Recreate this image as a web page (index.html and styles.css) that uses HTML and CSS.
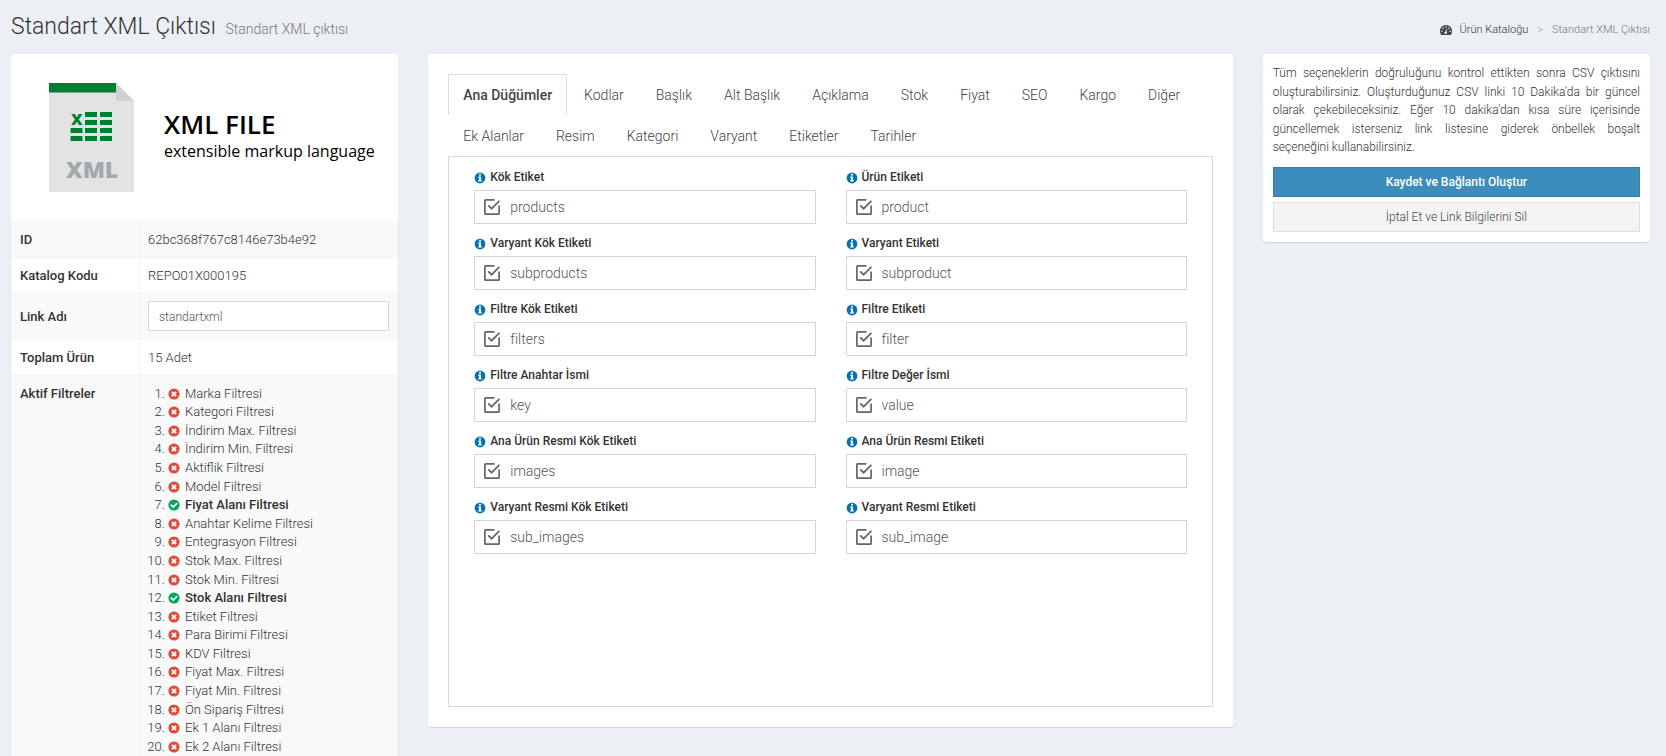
FILE: index.html
```html
<!DOCTYPE html>
<html lang="tr">
<head>
<meta charset="utf-8">
<title>Standart XML Çıktısı</title>
<link rel="stylesheet" href="styles.css">
</head>
<body>
<svg class="sprite" aria-hidden="true">
  <symbol id="no" viewBox="0 0 12 12"><circle cx="6" cy="6" r="5.6" fill="#dd4b39"/><path d="M3.9 3.9l4.2 4.2M8.1 3.9L3.9 8.1" stroke="#fff" stroke-width="2"/></symbol>
  <symbol id="yes" viewBox="0 0 12 12"><circle cx="6" cy="6" r="5.6" fill="#00a65a"/><path d="M2.8 5.7l2.4 2.4 4-4" fill="none" stroke="#fff" stroke-width="1.8"/></symbol>
  <symbol id="info" viewBox="0 0 12 12"><circle cx="6" cy="6" r="5.4" fill="#0073b7"/><path d="M5 1.8h2v1.6H5zM4.2 4.5H7v3.7h.8v1.3H4.2V8.200H5V5.800h-.8z" fill="#fff"/></symbol>
  <symbol id="check" viewBox="0 0 18 18"><path d="M11.500 1.900H2.600Q1.900 1.900 1.900 2.600V15.400Q1.900 16.100 2.600 16.100H15.400Q16.100 16.100 16.100 15.400V7.500" fill="none" stroke="#666" stroke-width="1.700"/><path d="M5.200 7.300L8.600 10.700L16.400 2.900" fill="none" stroke="#666" stroke-width="1.700"/></symbol>
</svg>
<div class="page">
  <header class="top">
    <h1 class="title">Standart XML Çıktısı <small class="subtitle">Standart XML çıktısı</small></h1>
    <nav class="crumbs">
      <a class="crumb-link" href="#"><svg class="gauge" viewBox="0 0 14 12"><path d="M7 1a6 6 0 0 0-6 6.200Q1 9.300 2.100 10.800Q2.300 11 2.600 11H11.400Q11.700 11 11.900 10.800Q13 9.300 13 7.200A6 6 0 0 0 7 1Z" fill="#444"/><g fill="#ecf0f5"><circle cx="2.900" cy="7.200" r=".8"/><circle cx="4.100" cy="4.200" r=".8"/><circle cx="7" cy="3" r=".8"/><circle cx="9.900" cy="4.200" r=".8"/><circle cx="11.100" cy="7.200" r=".8"/><circle cx="6.700" cy="8.700" r="1.300"/></g><path d="M6.800 8.600L7.900 4.900" stroke="#ecf0f5" stroke-width=".8"/></svg>Ürün Kataloğu</a>
      <span class="crumb-sep">&gt;</span>
      <span class="crumb-here">Standart XML Çıktısı</span>
    </nav>
  </header>
  <main class="columns">
    <section class="panel">
      <div class="banner">
        <svg class="sheet" viewBox="0 0 86 110"><path d="M0 0H67L85 18V109H0Z" fill="#e3e3e3"/><path d="M67 0L85 18H67Z" fill="#d0d2d1"/><path d="M0 0H67V9.500H0Z" fill="#007f33"/><g fill="#007f33"><path d="M36 29h12v5H36zM51 29h12v5H51zM36 37h12v5H36zM51 37h12v5H51zM21.500 45h12v5h-12zM36 45h12v5H36zM51 45h12v5H51zM21.500 53h12v5h-12zM36 53h12v5H36zM51 53h12v5H51z"/><text class="sheet-x" x="22" y="42">X</text></g><text class="sheet-name" x="17" y="95">XML</text></svg>
        <div class="banner-text"><strong class="banner-title">XML FILE</strong><span>extensible markup language</span></div>
      </div>
      <table class="info">
        <tr><th scope="row">ID</th><td>62bc368f767c8146e73b4e92</td></tr>
        <tr><th scope="row">Katalog Kodu</th><td>REPO01X000195</td></tr>
        <tr><th scope="row"><label for="link">Link Adı</label></th><td class="input-cell"><input class="link-input" id="link" type="text" value="standartxml"></td></tr>
        <tr><th scope="row">Toplam Ürün</th><td>15 Adet</td></tr>
        <tr><th scope="row">Aktif Filtreler</th><td>
          <ol class="filters">
            <li><svg class="dot"><use href="#no"/></svg>Marka Filtresi</li>
            <li><svg class="dot"><use href="#no"/></svg>Kategori Filtresi</li>
            <li><svg class="dot"><use href="#no"/></svg>İndirim Max. Filtresi</li>
            <li><svg class="dot"><use href="#no"/></svg>İndirim Min. Filtresi</li>
            <li><svg class="dot"><use href="#no"/></svg>Aktiflik Filtresi</li>
            <li><svg class="dot"><use href="#no"/></svg>Model Filtresi</li>
            <li><svg class="dot"><use href="#yes"/></svg><b>Fiyat Alanı Filtresi</b></li>
            <li><svg class="dot"><use href="#no"/></svg>Anahtar Kelime Filtresi</li>
            <li><svg class="dot"><use href="#no"/></svg>Entegrasyon Filtresi</li>
            <li><svg class="dot"><use href="#no"/></svg>Stok Max. Filtresi</li>
            <li><svg class="dot"><use href="#no"/></svg>Stok Min. Filtresi</li>
            <li><svg class="dot"><use href="#yes"/></svg><b>Stok Alanı Filtresi</b></li>
            <li><svg class="dot"><use href="#no"/></svg>Etiket Filtresi</li>
            <li><svg class="dot"><use href="#no"/></svg>Para Birimi Filtresi</li>
            <li><svg class="dot"><use href="#no"/></svg>KDV Filtresi</li>
            <li><svg class="dot"><use href="#no"/></svg>Fiyat Max. Filtresi</li>
            <li><svg class="dot"><use href="#no"/></svg>Fiyat Min. Filtresi</li>
            <li><svg class="dot"><use href="#no"/></svg>Ön Sipariş Filtresi</li>
            <li><svg class="dot"><use href="#no"/></svg>Ek 1 Alanı Filtresi</li>
            <li><svg class="dot"><use href="#no"/></svg>Ek 2 Alanı Filtresi</li>
          </ol>
        </td></tr>
      </table>
    </section>
    <section class="panel editor">
      <nav class="tabs">
        <a class="tab active" href="#">Ana Düğümler</a><a class="tab" href="#">Kodlar</a><a class="tab" href="#">Başlık</a><a class="tab" href="#">Alt Başlık</a><a class="tab" href="#">Açıklama</a><a class="tab" href="#">Stok</a><a class="tab" href="#">Fiyat</a><a class="tab" href="#">SEO</a><a class="tab" href="#">Kargo</a><a class="tab" href="#">Diğer</a><a class="tab" href="#">Ek Alanlar</a><a class="tab" href="#">Resim</a><a class="tab" href="#">Kategori</a><a class="tab" href="#">Varyant</a><a class="tab" href="#">Etiketler</a><a class="tab" href="#">Tarihler</a>
      </nav>
      <form class="fields">
        <div class="field"><label class="label" for="f1"><svg class="tip"><use href="#info"/></svg>Kök Etiket</label><div class="box"><svg class="tick"><use href="#check"/></svg><input class="value" id="f1" type="text" value="products"></div></div>
        <div class="field"><label class="label" for="f2"><svg class="tip"><use href="#info"/></svg>Ürün Etiketi</label><div class="box"><svg class="tick"><use href="#check"/></svg><input class="value" id="f2" type="text" value="product"></div></div>
        <div class="field"><label class="label" for="f3"><svg class="tip"><use href="#info"/></svg>Varyant Kök Etiketi</label><div class="box"><svg class="tick"><use href="#check"/></svg><input class="value" id="f3" type="text" value="subproducts"></div></div>
        <div class="field"><label class="label" for="f4"><svg class="tip"><use href="#info"/></svg>Varyant Etiketi</label><div class="box"><svg class="tick"><use href="#check"/></svg><input class="value" id="f4" type="text" value="subproduct"></div></div>
        <div class="field"><label class="label" for="f5"><svg class="tip"><use href="#info"/></svg>Filtre Kök Etiketi</label><div class="box"><svg class="tick"><use href="#check"/></svg><input class="value" id="f5" type="text" value="filters"></div></div>
        <div class="field"><label class="label" for="f6"><svg class="tip"><use href="#info"/></svg>Filtre Etiketi</label><div class="box"><svg class="tick"><use href="#check"/></svg><input class="value" id="f6" type="text" value="filter"></div></div>
        <div class="field"><label class="label" for="f7"><svg class="tip"><use href="#info"/></svg>Filtre Anahtar İsmi</label><div class="box"><svg class="tick"><use href="#check"/></svg><input class="value" id="f7" type="text" value="key"></div></div>
        <div class="field"><label class="label" for="f8"><svg class="tip"><use href="#info"/></svg>Filtre Değer İsmi</label><div class="box"><svg class="tick"><use href="#check"/></svg><input class="value" id="f8" type="text" value="value"></div></div>
        <div class="field"><label class="label" for="f9"><svg class="tip"><use href="#info"/></svg>Ana Ürün Resmi Kök Etiketi</label><div class="box"><svg class="tick"><use href="#check"/></svg><input class="value" id="f9" type="text" value="images"></div></div>
        <div class="field"><label class="label" for="f10"><svg class="tip"><use href="#info"/></svg>Ana Ürün Resmi Etiketi</label><div class="box"><svg class="tick"><use href="#check"/></svg><input class="value" id="f10" type="text" value="image"></div></div>
        <div class="field"><label class="label" for="f11"><svg class="tip"><use href="#info"/></svg>Varyant Resmi Kök Etiketi</label><div class="box"><svg class="tick"><use href="#check"/></svg><input class="value" id="f11" type="text" value="sub_images"></div></div>
        <div class="field"><label class="label" for="f12"><svg class="tip"><use href="#info"/></svg>Varyant Resmi Etiketi</label><div class="box"><svg class="tick"><use href="#check"/></svg><input class="value" id="f12" type="text" value="sub_image"></div></div>
      </form>
    </section>
    <aside class="panel actions">
      <p class="note">Tüm seçeneklerin doğruluğunu kontrol ettikten sonra CSV çıktısını oluşturabilirsiniz. Oluşturduğunuz CSV linki 10 Dakika'da bir güncel olarak çekebileceksiniz. Eğer 10 dakika'dan kısa süre içerisinde güncellemek isterseniz link listesine giderek önbellek boşalt seçeneğini kullanabilirsiniz.</p>
      <button class="btn btn-primary" type="button">Kaydet ve Bağlantı Oluştur</button>
      <button class="btn" type="button">İptal Et ve Link Bilgilerini Sil</button>
    </aside>
  </main>
</div>
</body>
</html>
```
FILE: styles.css
```css
* { box-sizing: border-box; }
body {
  margin: 0;
  background: #ecf0f5;
  color: #333;
  font: 300 13px/1.43 Roboto, "Open Sans", sans-serif;
}
input, button { font: inherit; }
a { color: inherit; text-decoration: none; }
b { font-weight: 500; }
.sprite { display: none; }
.page {
  height: 100vh;
  overflow: hidden;
  padding: 0 16px 0 11px;
}
.top {
  display: flex;
  align-items: center;
  justify-content: space-between;
  height: 54px;
  padding-top: 2px;
}
.title { margin: 0; font-size: 23px; font-weight: 300; line-height: 32px; }
.subtitle { margin-left: 4px; font-size: 14px; font-weight: 300; color: #777; }
.crumbs { display: flex; align-items: center; gap: 9px; padding-top: 3px; font-size: 11px; color: #777; }
.crumb-link { display: flex; align-items: center; gap: 7px; color: #333; }
.crumb-sep { color: #aaa; }
.gauge { width: 14px; height: 12px; }

.columns {
  display: grid;
  grid-template-columns: repeat(4, minmax(0, 1fr));
  gap: 30px;
  align-items: start;
}
.panel {
  background: #fff;
  border-radius: 3px;
  box-shadow: 0 1px 1px rgba(0, 0, 0, .12);
}

.banner { display: flex; align-items: center; gap: 29px; padding: 29px 20px 28px 38px; }
.sheet { flex: none; width: 86px; height: 110px; }
.sheet-x { font: 800 16px "Open Sans", sans-serif; }
.sheet-name { font: 800 23px "Open Sans", sans-serif; fill: #a3a8ab; }
.banner-text { display: flex; flex-direction: column; padding-bottom: 4px; font: 400 16px/24px "Open Sans", sans-serif; color: #000; white-space: nowrap; }
.banner-title { font-size: 26px; font-weight: 600; line-height: 30px; }

.info { width: 100%; border-collapse: collapse; }
.info th, .info td { padding: 9px 8px 7px; border: 1px solid #f4f4f4; text-align: left; vertical-align: middle; }
.info .input-cell { padding: 8px; }
.info th { width: 128px; font-weight: 500; }
.info tr:nth-child(odd) { background: #f9f9f9; }
.info tr:last-child > * { vertical-align: top; }
.link-input { display: block; width: 100%; height: 30px; padding: 6px 10px 4px; border: 1px solid #d2d6de; background: #fff; color: #555; font-size: 12px; }
.filters { margin: 0; padding-left: 20px; }
.dot { width: 12px; height: 12px; margin-right: 5px; vertical-align: -2px; }

.editor { grid-column: span 2; padding: 20px; }
.tabs { display: flex; flex-wrap: wrap; column-gap: 2px; font-size: 14px; line-height: 20px; color: #444; }
.tab { height: 41px; padding: 10px 14px; border: 1px solid transparent; border-bottom: 0; }
.active { border-color: #ddd; font-weight: 500; }
.fields {
  display: grid;
  grid-template-columns: 1fr 1fr;
  gap: 11px 30px;
  align-content: start;
  min-height: 551px;
  padding: 12px 25px;
  border: 1px solid #d6d9de;
}
.label { display: flex; align-items: center; gap: 4px; height: 17px; margin-bottom: 4px; font-size: 12px; font-weight: 500; }
.tip { width: 12px; height: 12px; }
.box { display: flex; align-items: center; gap: 9px; height: 34px; padding: 0 8px; border: 1px solid #d2d6de; }
.tick { flex: none; width: 18px; height: 18px; }
.value { flex: 1; min-width: 0; padding: 1px 0 0; border: 0; outline: 0; background: none; color: #555; font-size: 14px; }

.actions { display: flex; flex-direction: column; gap: 5px; padding: 10px; }
.note { margin: 0 0 5px; font-size: 12px; line-height: 1.55; text-align: justify; }
.btn { height: 30px; padding: 2px 12px 0; border: 1px solid #ddd; background: #f4f4f4; color: #444; font-size: 12px; }
.btn-primary { border-color: #367fa9; background: #3c8dbc; color: #fff; font-weight: 500; }
```
